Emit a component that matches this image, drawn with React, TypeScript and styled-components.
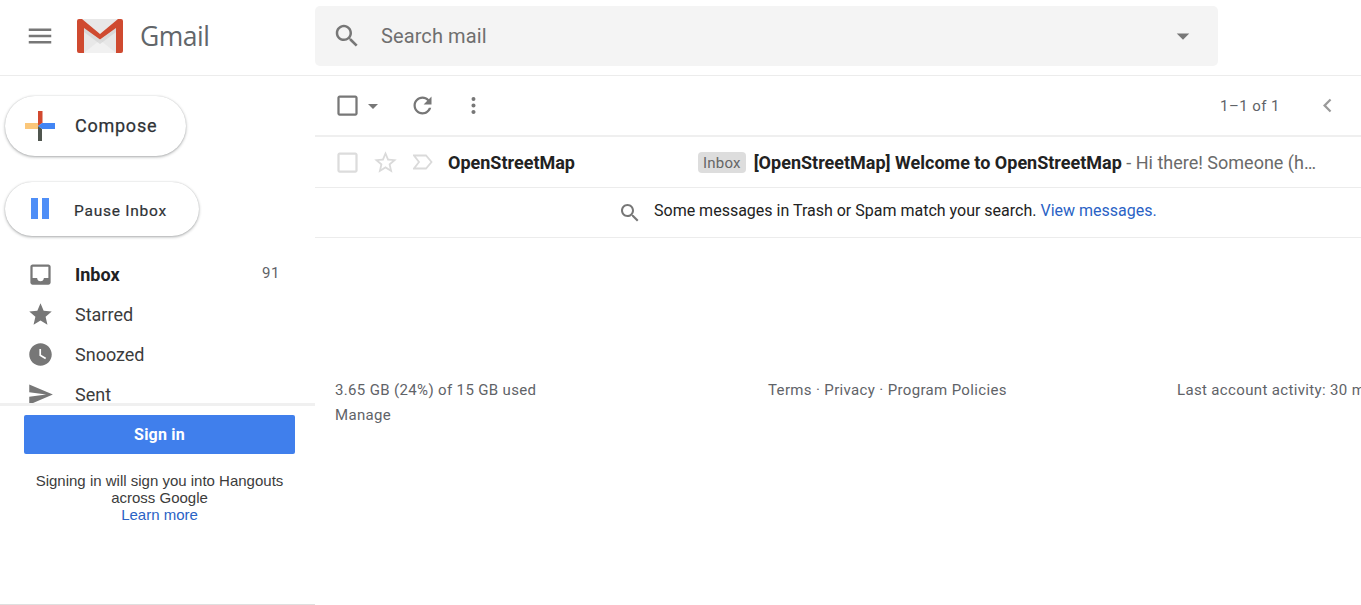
import React from "react";
import styled, { createGlobalStyle } from "styled-components";

const Global = createGlobalStyle`
  html, body { margin: 0; padding: 0; background: #fff; height: 100%; overflow: hidden; }
  body { font-family: Roboto, "Liberation Sans", sans-serif; color: #202124; }
  a { text-decoration: none; }
`;

const Page = styled.div`
  width: 1361px; height: 605px; display: flex; flex-direction: column; overflow: hidden;
`;
const Header = styled.header`
  height: 75px; flex: none; display: flex; align-items: center; border-bottom: 1px solid #ececec;
`;
const Brand = styled.div`
  width: 315px; flex: none; display: flex; align-items: center; padding: 0 0 4px 25px; box-sizing: border-box;
`;
const BrandName = styled.span`
  font-family: "Open Sans", sans-serif; font-size: 26.5px; color: #62666a; margin: 0 0 0 17px; letter-spacing: -0.5px;
`;
const Search = styled.div`
  width: 903px; height: 60px; background: #f4f4f4; border-radius: 5px; display: flex; align-items: center;
  padding: 0 20px 0 17px; box-sizing: border-box; margin-top: -3px;
`;
const SearchText = styled.span`
  flex: 1; font-size: 20px; color: #6f6f6f; margin-left: 19px; letter-spacing: 0.1px;
`;
const Icon = styled.svg<{ $size: number; $color?: string }>`
  width: ${p => p.$size}px; height: ${p => p.$size}px; fill: ${p => p.$color ?? "#777"}; flex: none; display: block;
`;
const Body = styled.div`
  flex: 1; display: flex; min-height: 0;
`;
const Side = styled.aside`
  width: 315px; flex: none; display: flex; flex-direction: column; height: 529px;
`;
const SideTop = styled.div`
  height: 327px; flex: none; overflow: hidden; padding: 20px 0 0 5px; box-sizing: border-box;
`;
const Pill = styled.div<{ $w: number; $h: number; $mb: number }>`
  width: ${p => p.$w}px; height: ${p => p.$h}px; margin-bottom: ${p => p.$mb}px; border-radius: 30px; background: #fff;
  box-shadow: 0 1px 3px rgba(60,64,67,.45), 0 0 1px rgba(60,64,67,.2);
  display: flex; align-items: center; box-sizing: border-box;
`;
const ComposeLabel = styled.span`
  font-size: 18px; font-weight: 400; color: #2f3236; margin: 0 0 2px 20px; letter-spacing: 0.75px; -webkit-text-stroke: 0.25px #2f3236;
`;
const PauseLabel = styled.span`
  font-size: 15.5px; font-weight: 400; color: #2f3236; margin: 4px 0 0 25px; letter-spacing: 0.75px; -webkit-text-stroke: 0.2px #2f3236;
`;
const Nav = styled.nav`
  display: flex; flex-direction: column; margin-left: -5px;
`;
const NavRow = styled.div`
  height: 40px; display: flex; align-items: center; padding-left: 27px; width: 280px; box-sizing: border-box;
`;
const NavLabel = styled.span<{ $bold?: boolean }>`
  flex: 1; font-size: 18px; margin-left: 21px; color: ${p => p.$bold ? "#202124" : "#3c3c3c"}; font-weight: ${p => p.$bold ? 700 : 400};
`;
const Count = styled.span`
  font-size: 15px; color: #5f6368; letter-spacing: 0.6px; margin-top: -2px;
`;
const Hangouts = styled.div`
  flex: 1; border-top: 3px solid #f0f0f0; border-bottom: 1px solid #dfdfdf; padding: 9px 20px 0 24px; text-align: center;
  font-family: "Liberation Sans", Arial, sans-serif; font-size: 15px; line-height: 17px; color: #3c3c3c;
`;
const SignIn = styled.div`
  height: 39px; background: #407fec; border-radius: 2px; color: #fff; font-family: Roboto, sans-serif; font-weight: 700; font-size: 16px;
  display: flex; align-items: center; justify-content: center; margin-bottom: 18px; letter-spacing: 0.2px;
`;
const Blue = styled.a`
  color: #2a62c5;
`;
const Main = styled.main`
  flex: 1; min-width: 0; overflow: hidden; display: flex; flex-direction: column;
`;
const Toolbar = styled.div`
  height: 59px; flex: none; display: flex; align-items: center; padding-left: 19px; border-bottom: 2px solid #efefef;
`;
const Pager = styled.span`
  margin-left: auto; font-size: 15px; color: #5f6368; letter-spacing: 0.45px; margin-right: 34px;
`;
const Row = styled.div`
  height: 50px; flex: none; display: flex; align-items: center; padding-left: 19px; border-bottom: 1px solid #ececec;
`;
const Sender = styled.span`
  width: 250px; flex: none; font-size: 18px; font-weight: 700; color: #222; margin-left: 15px;
`;
const Tag = styled.span`
  flex: none; background: #dddddd; color: #666; font-size: 15px; border-radius: 4px; padding: 3px 5px 1px; margin-right: 8px; line-height: 17px; letter-spacing: 0.2px;
`;
const Snippet = styled.span`
  width: 563px; flex: none; overflow: hidden; white-space: nowrap; text-overflow: ellipsis; font-size: 18px; color: #6a6a6a;
`;
const Subject = styled.b`
  color: #222; font-weight: 700;
`;
const Notice = styled.div`
  height: 49px; flex: none; display: flex; align-items: center; padding-left: 303px; border-bottom: 1px solid #ececec;
  font-size: 16px; color: #222;
`;
const NoticeText = styled.span`
  margin: 0 0 4px 12px;
`;
const Footer = styled.div`
  display: grid; grid-template-columns: 433px 409px max-content; padding: 140px 0 0 20px; font-size: 15px; color: #5f6368;
  line-height: 25px; letter-spacing: 0.35px; white-space: nowrap;
`;
const Spacer = styled.span<{ $w: number }>`
  width: ${p => p.$w}px; flex: none;
`;

const P = {
  menu: "M3 18h18v-2H3v2zm0-5h18v-2H3v2zm0-7v2h18V6H3z",
  search: "M15.5 14h-.79l-.28-.27C15.41 12.59 16 11.11 16 9.5 16 5.91 13.09 3 9.5 3S3 5.91 3 9.5 5.91 16 9.5 16c1.61 0 3.09-.59 4.23-1.57l.27.28v.79l5 4.99L20.49 19l-4.99-5zm-6 0C7.01 14 5 11.99 5 9.5S7.01 5 9.5 5 14 7.01 14 9.5 11.99 14 9.5 14z",
  caret: "M7 10l5 5 5-5z",
  box: "M19 5v14H5V5h14m0-2H5c-1.1 0-2 .9-2 2v14c0 1.1.9 2 2 2h14c1.1 0 2-.9 2-2V5c0-1.1-.9-2-2-2z",
  refresh: "M17.65 6.35C16.2 4.9 14.21 4 12 4c-4.42 0-7.99 3.58-7.99 8s3.57 8 7.99 8c3.73 0 6.84-2.55 7.73-6h-2.08c-.82 2.33-3.04 4-5.65 4-3.31 0-6-2.69-6-6s2.69-6 6-6c1.66 0 3.14.69 4.22 1.78L13 11h7V4l-2.35 2.35z",
  more: "M12 8c1.100 0 1.700-.8 1.700-1.800S13.100 4.400 12 4.400s-1.700.8-1.700 1.800S10.900 8 12 8zm0 2.200c-1 0-1.800.8-1.800 1.800s.8 1.800 1.800 1.800 1.800-.8 1.800-1.800-.8-1.800-1.800-1.800zm0 5.800c-1 0-1.800.8-1.800 1.800s.8 1.800 1.800 1.800 1.800-.8 1.800-1.800-.8-1.800-1.800-1.800z",
  left: "M15.41 7.41L14 6l-6 6 6 6 1.41-1.41L10.83 12z",
  inbox: "M19 3H4.99c-1.11 0-1.98.89-1.98 2L3 19c0 1.1.88 2 1.99 2H19c1.1 0 2-.9 2-2V5c0-1.11-.9-2-2-2zm0 12h-4c0 1.66-1.35 3-3 3s-3-1.34-3-3H4.99V5H19v10z",
  star: "M12 17.27L18.18 21l-1.64-7.03L22 9.24l-7.19-.61L12 2 9.19 8.63 2 9.24l5.46 4.73L5.82 21z",
  clock: "M12 2C6.5 2 2 6.5 2 12s4.5 10 10 10 10-4.5 10-10S17.5 2 12 2zm4.2 14.2L11 13V7h1.5v5.2l4.5 2.7-.8 1.3z",
  sent: "M2.01 21L23 12 2.01 3 2 10l15 2-15 2z",
  starO: "M22 9.24l-7.19-.62L12 2 9.19 8.63 2 9.24l5.46 4.73L5.82 21 12 17.27 18.18 21l-1.63-7.03L22 9.24zM12 15.4l-3.76 2.27 1-4.28-3.32-2.88 4.38-.38L12 6.1l1.71 4.04 4.38.38-3.32 2.88 1 4.28L12 15.4z",
};

const I = ({ d, size, color }: { d: string; size: number; color?: string }) => (
  <Icon viewBox="0 0 24 24" $size={size} $color={color}><path d={d} /></Icon>
);

const GmailLogo = () => (
  <svg width="46" height="34" viewBox="0 0 46 34" style={{ flex: "none" }}>
    <path d="M3 0h40v34H3z" fill="#e8e8e8" />
    <path d="M7 34 23 21 39 34z" fill="#f1f1f1" />
    <path d="M7 9 23 21 39 9v4L23 25 7 13z" fill="#cfcfcf" opacity=".6" />
    <path d="M2 0h3L23 15 41 0h3a2 2 0 0 1 2 2v30a2 2 0 0 1-2 2h-5V9L23 20.500 7 9v25H2a2 2 0 0 1-2-2V2a2 2 0 0 1 2-2z" fill="#cf4a30" />
  </svg>
);

const ComposePlus = () => (
  <svg width="30" height="30" viewBox="0 0 30 30" style={{ flex: "none", marginLeft: 20 }}>
    <path d="M0 12h13v6H0z" fill="#fbc77a" />
    <path d="M13 0h4.500v12L13 15z" fill="#d2492f" />
    <path d="M13 15l4-3h13v6H17z" fill="#4285f4" />
    <path d="M13 15l4 3v12h-4z" fill="#50564f" />
  </svg>
);

const PauseIcon = () => (
  <svg width="18" height="22" viewBox="0 0 18 22" style={{ flex: "none", marginLeft: 26 }}>
    <path d="M0 0h7v21H0zM11 0h7v21h-7z" fill="#4e8ef7" />
  </svg>
);

const Important = () => (
  <svg width="20" height="16" viewBox="0 0 20 16" style={{ flex: "none" }}>
    <path d="M1 1.500h12L18.500 8 13 14.500H1L6 8z" fill="none" stroke="#dadada" strokeWidth="1.800" />
  </svg>
);

export default function App() {
  return (
    <Page>
      <Global />
      <Header>
        <Brand>
          <I d={P.menu} size={30} />
          <Spacer $w={22} />
          <GmailLogo />
          <BrandName>Gmail</BrandName>
        </Brand>
        <Search>
          <I d={P.search} size={30} />
          <SearchText>Search mail</SearchText>
          <I d={P.caret} size={30} />
        </Search>
      </Header>
      <Body>
        <Side>
          <SideTop>
            <Pill $w={181} $h={60} $mb={26}>
              <ComposePlus />
              <ComposeLabel>Compose</ComposeLabel>
            </Pill>
            <Pill $w={194} $h={54} $mb={18}>
              <PauseIcon />
              <PauseLabel>Pause Inbox</PauseLabel>
            </Pill>
            <Nav>
              <NavRow><I d={P.inbox} size={27} /><NavLabel $bold>Inbox</NavLabel><Count>91</Count></NavRow>
              <NavRow><I d={P.star} size={27} /><NavLabel>Starred</NavLabel></NavRow>
              <NavRow><I d={P.clock} size={27} /><NavLabel>Snoozed</NavLabel></NavRow>
              <NavRow><I d={P.sent} size={27} /><NavLabel>Sent</NavLabel></NavRow>
            </Nav>
          </SideTop>
          <Hangouts>
            <SignIn>Sign in</SignIn>
            Signing in will sign you into Hangouts across Google<br />
            <Blue>Learn more</Blue>
          </Hangouts>
        </Side>
        <Main>
          <Toolbar>
            <I d={P.box} size={27} />
            <I d={P.caret} size={24} />
            <Spacer $w={24} />
            <I d={P.refresh} size={27} />
            <Spacer $w={24} />
            <I d={P.more} size={27} />
            <Pager>1–1 of 1</Pager>
            <I d={P.left} size={27} color="#9a9a9a" />
            <Spacer $w={20} />
          </Toolbar>
          <Row>
            <I d={P.box} size={27} color="#dcdcdc" />
            <Spacer $w={11} />
            <I d={P.starO} size={27} color="#dadada" />
            <Spacer $w={14} />
            <Important />
            <Sender>OpenStreetMap</Sender>
            <Tag>Inbox</Tag>
            <Snippet><Subject>[OpenStreetMap] Welcome to OpenStreetMap</Subject> - Hi there! Someone (has asked for an account)</Snippet>
          </Row>
          <Notice>
            <I d={P.search} size={24} />
            <NoticeText>Some messages in Trash or Spam match your search. <Blue>View messages.</Blue></NoticeText>
          </Notice>
          <Footer>
            <span>3.65 GB (24%) of 15 GB used</span>
            <span>Terms · Privacy · Program Policies</span>
            <span>Last account activity: 30 minutes ago</span>
            <span>Manage</span>
          </Footer>
        </Main>
      </Body>
    </Page>
  );
}
